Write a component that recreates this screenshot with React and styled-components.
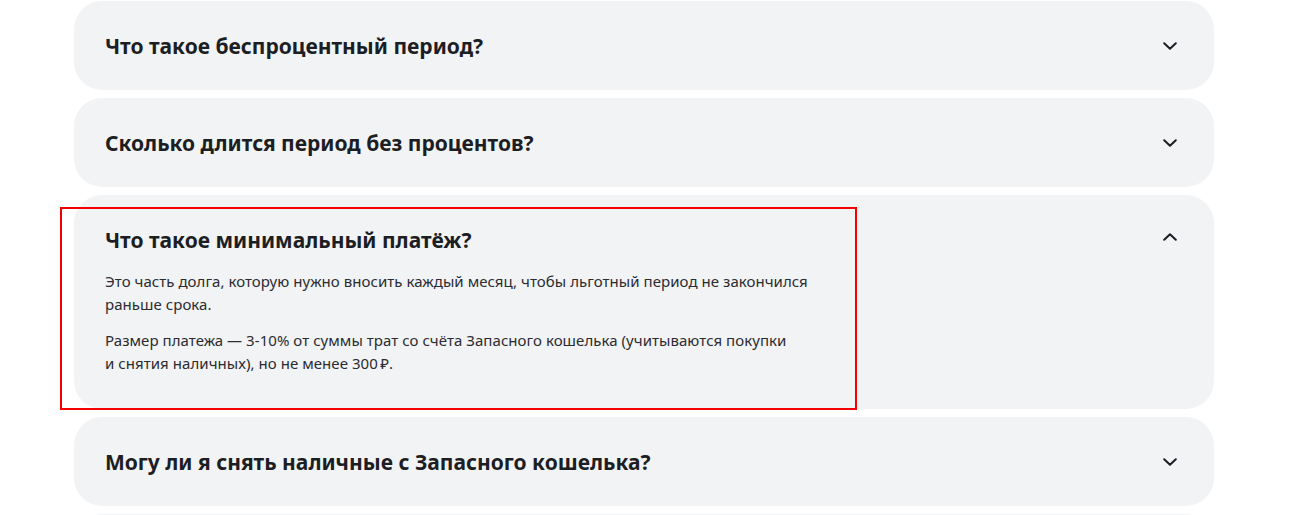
import React, { useState } from "react";
import styled, { createGlobalStyle } from "styled-components";

const Global = createGlobalStyle`
  * { box-sizing: border-box; }
  body {
    margin: 0;
    background: #fff;
    font-family: "Noto Sans", "Open Sans", sans-serif;
    color: #1c1e23;
  }
`;

const Page = styled.div`
  position: relative;
  padding: 1px 0 0 74px;
`;

const List = styled.div`
  width: 1140px;
  display: flex;
  flex-direction: column;
  gap: 8px;
`;

const Card = styled.div`
  background: #f2f3f5;
  border-radius: 28px;
`;

const Header = styled.button`
  width: 100%;
  display: flex;
  align-items: center;
  justify-content: space-between;
  padding: 31px 37px 30px 31px;
  border: none;
  background: none;
  text-align: left;
  cursor: pointer;
  font: inherit;
  color: inherit;
`;

const Title = styled.h3`
  margin: 0;
  font-size: 21px;
  line-height: 28px;
  font-weight: 700;
`;

const Chevron = styled.svg`
  flex: none;
  width: 14px;
  height: 8px;
  margin-top: ${(p) => (p.$open ? "-6px" : "0")};
  transform: ${(p) => (p.$open ? "rotate(180deg)" : "none")};
`;

const Body = styled.div`
  padding: 0 31px 34px;
  margin-top: -14px;
  max-width: 792px;
`;

const Text = styled.p`
  margin: 0 0 13px;
  font-size: 15px;
  line-height: 23px;
  letter-spacing: 0.05px;
  color: #2a2c31;

  &:last-child {
    margin-bottom: 0;
  }
`;

const Highlight = styled.div`
  position: absolute;
  left: 60px;
  top: 207px;
  width: 797px;
  height: 203px;
  border: 2px solid #f50000;
  pointer-events: none;
`;

const items = [
  { q: "Что такое беспроцентный период?" },
  { q: "Сколько длится период без процентов?" },
  {
    q: "Что такое минимальный платёж?",
    a: [
      "Это часть долга, которую нужно вносить каждый месяц, чтобы льготный период не закончился раньше срока.",
      "Размер платежа — 3-10% от суммы трат со счёта Запасного кошелька (учитываются покупки и\u00A0снятия наличных), но не менее 300\u202F₽.",
    ],
  },
  { q: "Могу ли я снять наличные с Запасного кошелька?" },
  { q: "Как погасить задолженность?" },
];

const Item = ({ q, a, open, onToggle }) => (
  <Card>
    <Header type="button" onClick={onToggle}>
      <Title>{q}</Title>
      <Chevron $open={open} viewBox="0 0 14 8" fill="none">
        <path
          d="M1.2 1.2L7 6.8L12.8 1.2"
          stroke="#1c1e23"
          strokeWidth="2"
          strokeLinecap="round"
          strokeLinejoin="round"
        />
      </Chevron>
    </Header>
    {open && a && (
      <Body>
        {a.map((t) => (
          <Text key={t}>{t}</Text>
        ))}
      </Body>
    )}
  </Card>
);

export default function App() {
  const [open, setOpen] = useState(2);
  return (
    <Page>
      <Global />
      <List>
        {items.map((it, i) => (
          <Item
            key={it.q}
            {...it}
            open={open === i}
            onToggle={() => setOpen(open === i ? -1 : i)}
          />
        ))}
      </List>
      <Highlight />
    </Page>
  );
}
